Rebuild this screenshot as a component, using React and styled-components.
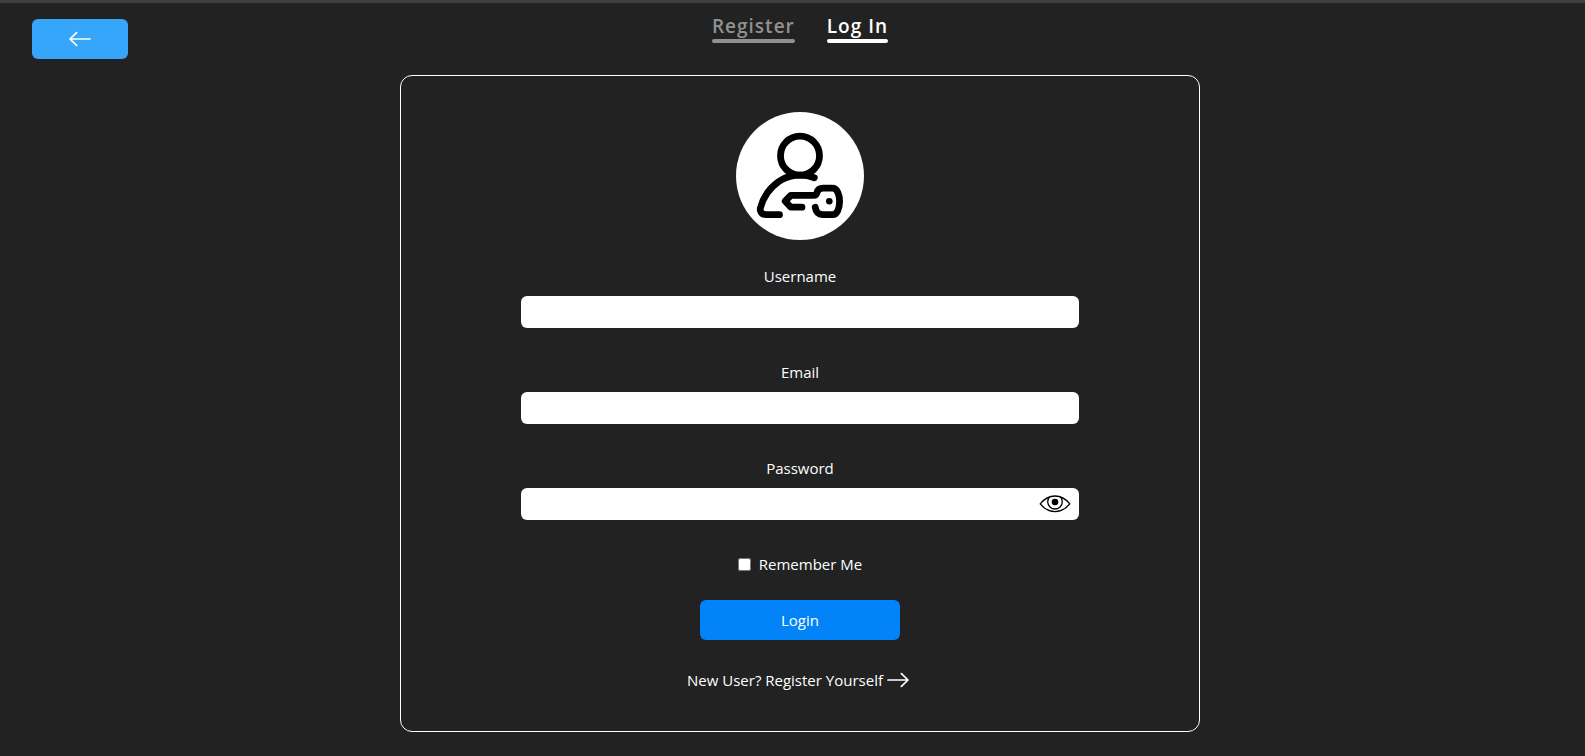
import React, { useId, useState } from "react";
import styled, { createGlobalStyle } from "styled-components";

const GlobalStyle = createGlobalStyle`
  *, *::before, *::after { box-sizing: border-box; }
  body {
    margin: 0;
    background: #222222;
    color: #ffffff;
    font-family: "Segoe UI", "Open Sans", "Noto Sans", sans-serif;
    font-size: 15px;
    line-height: 24px;
  }
`;

const Page = styled.div`
  min-height: 100vh;
  padding: 0 17px 24px 32px;
  border-top: 3px solid #3f3f3f;
`;

const Header = styled.header`
  display: grid;
  grid-template-columns: 1fr auto 1fr;
  align-items: start;
  height: 72px;
`;

const BackButton = styled.button`
  display: flex;
  align-items: center;
  justify-content: center;
  width: 96px;
  height: 40px;
  margin-top: 16px;
  padding: 0;
  border: 0;
  border-radius: 6px;
  background: #36a6fb;
  color: #ffffff;
  cursor: pointer;
`;

const Nav = styled.nav`
  display: flex;
  gap: 32px;
  padding-top: 10px;
`;

const NavLink = styled.a`
  display: flex;
  flex-direction: column;
  color: ${(p) => (p.$active ? "#ffffff" : "#919191")};
  font-size: 19px;
  font-weight: 600;
  letter-spacing: 1px;
  line-height: 26px;
  text-decoration: none;

  &::after {
    content: "";
    height: 4px;
    border-radius: 2px;
    background: currentColor;
  }
`;

const Card = styled.form`
  display: flex;
  flex-direction: column;
  align-items: center;
  width: 100%;
  max-width: 800px;
  margin: 0 auto;
  padding: 36px 120px 39px;
  border: 1px solid #ffffff;
  border-radius: 12px;
`;

const Avatar = styled.svg`
  width: 128px;
  height: 128px;
  margin-bottom: 24px;
  border-radius: 50%;
  background: #ffffff;
`;

const FieldGroup = styled.div`
  display: flex;
  flex-direction: column;
  gap: 8px;
  width: 100%;
  margin-bottom: 32px;
  text-align: center;
`;

const InputWrap = styled.div`
  position: relative;
  display: flex;
`;

const Input = styled.input`
  width: 100%;
  height: 32px;
  padding: 0 ${(p) => (p.$withToggle ? 48 : 8)}px 0 8px;
  border: 0;
  border-radius: 6px;
  background: #ffffff;
  color: #111111;
  font: inherit;
`;

const EyeButton = styled.button`
  position: absolute;
  top: 0;
  right: 8px;
  width: 32px;
  height: 32px;
  padding: 0;
  border: 0;
  background: none;
  color: #000000;
  cursor: pointer;

  svg { display: block; }
`;

const Remember = styled.label`
  display: flex;
  align-items: center;
  gap: 8px;
  margin-bottom: 24px;
`;

const Checkbox = styled.input`
  width: 13px;
  height: 13px;
  margin: 0;
`;

const LoginButton = styled.button`
  width: 200px;
  height: 40px;
  margin-bottom: 28px;
  border: 0;
  border-radius: 6px;
  background: #0284f8;
  color: #ffffff;
  font: inherit;
  cursor: pointer;
`;

const RegisterLink = styled.a`
  display: flex;
  align-items: center;
  gap: 4px;
  padding-right: 4px;
  color: inherit;
  text-decoration: none;
`;

function ArrowIcon({ left }) {
  return (
    <svg width="22" height="16" viewBox="0 0 22 16" fill="none" stroke="currentColor"
      strokeWidth="1.7" strokeLinecap="round" strokeLinejoin="round" aria-hidden="true">
      <path d={left ? "M21 8H1M7.600 1.600L1 8l6.600 6.400" : "M1 8h20M14.400 1.600L21 8l-6.600 6.400"} />
    </svg>
  );
}

function UserKeyIcon() {
  return (
    <Avatar viewBox="0 0 128 128" fill="none" stroke="#000000" strokeWidth="6.8"
      strokeLinecap="round" strokeLinejoin="round" aria-hidden="true">
      <circle cx="64" cy="43.7" r="19.5" />
      <path d="M78.300 65.700C66 61.300 52.500 62.800 42.500 69.800C33 76.500 27 86 24.400 96C23.500 99.700 26 102.700 30 102.700H43.500" />
      <path d="M66 95.200H54.800L49.200 89.200L54.800 83.300H78C80 83.300 80.300 82.800 80.800 81C81.700 77.500 83.500 76.200 87 76.200H96.500C101 76.200 103.600 82.500 103.600 89.300C103.600 96.500 101 102.700 96.500 102.700H86.500C82.500 102.700 80 100 79.200 95.300" />
      <circle cx="93.3" cy="89.3" r="3.3" fill="#000000" stroke="none" />
    </Avatar>
  );
}

function EyeIcon() {
  return (
    <svg width="32" height="32" viewBox="0 0 32 32" fill="none" stroke="currentColor"
      strokeWidth="1.3" strokeLinejoin="round" aria-hidden="true">
      <path d="M1.200 15.800C5.500 10.600 10.300 8 16 8s10.500 2.600 14.800 7.800C26.500 21 21.700 23.600 16 23.600S5.500 21 1.200 15.800z" />
      <path d="M10.500 8.900A7.300 7.300 0 1 0 21.500 8.900" />
      <circle cx="16" cy="14" r="3.300" fill="currentColor" stroke="none" />
    </svg>
  );
}

function Field({ label, toggle, ...rest }) {
  const id = useId();
  return (
    <FieldGroup>
      <label htmlFor={id}>{label}</label>
      <InputWrap>
        <Input id={id} $withToggle={Boolean(toggle)} {...rest} />
        {toggle}
      </InputWrap>
    </FieldGroup>
  );
}

export default function App() {
  const [visible, setVisible] = useState(false);
  return (
    <>
      <GlobalStyle />
      <Page>
        <Header>
          <BackButton type="button" aria-label="Back"><ArrowIcon left /></BackButton>
          <Nav>
            <NavLink href="#register">Register</NavLink>
            <NavLink href="#login" $active aria-current="page">Log In</NavLink>
          </Nav>
        </Header>
        <main>
          <Card onSubmit={(e) => e.preventDefault()}>
            <UserKeyIcon />
            <Field label="Username" type="text" name="username" />
            <Field label="Email" type="email" name="email" />
            <Field
              label="Password"
              type={visible ? "text" : "password"}
              name="password"
              toggle={
                <EyeButton type="button" aria-label="Show password" onClick={() => setVisible(!visible)}>
                  <EyeIcon />
                </EyeButton>
              }
            />
            <Remember>
              <Checkbox type="checkbox" name="remember" />
              Remember Me
            </Remember>
            <LoginButton type="submit">Login</LoginButton>
            <RegisterLink href="#register">
              New User? Register Yourself
              <ArrowIcon />
            </RegisterLink>
          </Card>
        </main>
      </Page>
    </>
  );
}
